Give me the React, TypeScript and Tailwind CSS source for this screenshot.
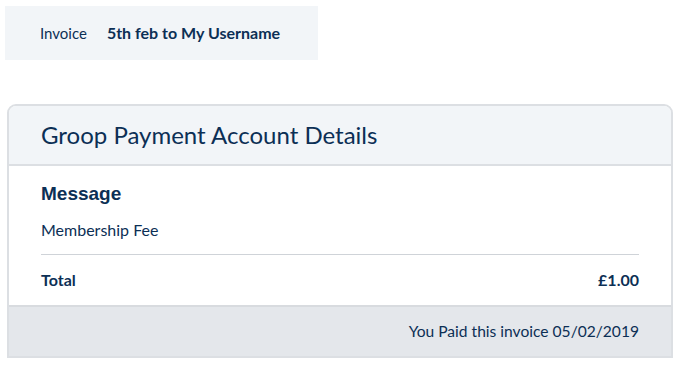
import React from "react";

export default function App() {
  const lato = { fontFamily: "Lato, 'Open Sans', sans-serif" };
  return (
    <div className="bg-white w-[678px] h-[365px] text-[#0c2f55]" style={lato}>
      <div className="pt-[6px] pl-[5px]">
        <div className="w-[313px] h-[54px] bg-[#f2f5f8] flex items-center pl-[35px]">
          <span className="text-[15px]">Invoice</span>
          <span className="text-[16px] font-bold ml-[20px]">5th feb to My Username</span>
        </div>
      </div>
      <div className="mt-[44px] ml-[7px] w-[666px] border-2 border-[#dcdfe3] rounded-t-[9px] overflow-hidden">
        <div className="h-[60px] bg-[#f2f5f8] border-b-2 border-[#dcdfe3] flex items-center px-[32px]">
          <span className="text-[24px] leading-none">Groop Payment Account Details</span>
        </div>
        <div className="px-[32px] bg-white">
          <div className="pt-[16px] text-[19px] font-bold leading-[24px]" style={{ fontFamily: "'Liberation Sans', Arial, sans-serif" }}>
            Message
          </div>
          <div className="mt-[14px] text-[16px] leading-[20px]">Membership Fee</div>
          <div className="mt-[14px] border-t border-[#cfd3d8]" />
          <div className="flex justify-between items-center h-[50px] text-[16px] font-bold">
            <span>Total</span>
            <span>£1.00</span>
          </div>
        </div>
        <div className="h-[51px] bg-[#e4e7eb] border-t-2 border-[#d8dbdf] flex items-center justify-end px-[32px] text-[15.6px]">
          You Paid this invoice 05/02/2019
        </div>
      </div>
    </div>
  );
}
